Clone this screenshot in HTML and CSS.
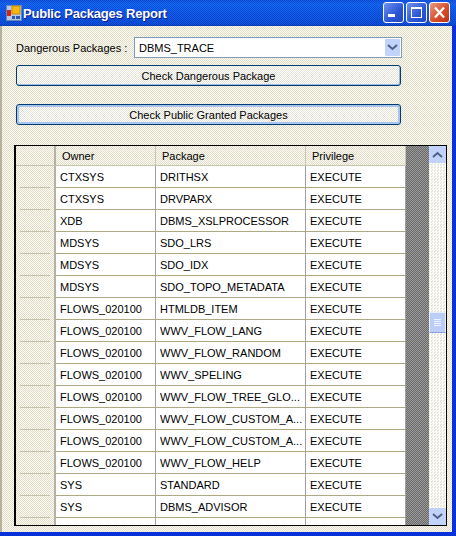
FILE: index.html
```html
<!DOCTYPE html>
<html lang="en">
<head>
    <meta charset="UTF-8">
    <title>Public Packages Report</title>
    <link rel="stylesheet" href="styles.css">
</head>
<body>
    <div class="window">
        <!-- Title bar -->
        <div class="titlebar">
            <svg class="app-icon" width="16" height="16" viewBox="0 0 16 16">
                <rect x="0.5" y="0.5" width="15" height="15" fill="#b8c8e8" stroke="#6a84b8"/>
                <rect x="6" y="1" width="8" height="8" fill="#f4b810" stroke="#c88808"/>
                <rect x="1" y="5" width="4" height="6" fill="#d02818"/>
                <rect x="6" y="11" width="3" height="3" fill="#3058a8"/>
                <rect x="10" y="11" width="4" height="3" fill="#3058a8"/>
            </svg>
            <span class="title">Public Packages Report</span>
            <div class="caption-buttons">
                <div class="caption-btn">
                    <svg width="19" height="19" viewBox="0 0 19 19"><rect x="4" y="11" width="7" height="3" fill="#fff"/></svg>
                </div>
                <div class="caption-btn">
                    <svg width="19" height="19" viewBox="0 0 19 19"><rect x="4.5" y="4.5" width="10" height="10" fill="none" stroke="#fff"/><rect x="4" y="4" width="11" height="2" fill="#fff"/></svg>
                </div>
                <div class="caption-btn close">
                    <svg width="19" height="19" viewBox="0 0 19 19"><path d="M5 4.5 L14 14.5 M14 4.5 L5 14.5" stroke="#fff" stroke-width="2.2" fill="none"/></svg>
                </div>
            </div>
        </div>

        <!-- Form -->
        <div class="content">
            <div class="combo-row">
                <label class="combo-label">Dangerous Packages :</label>
                <div class="combo">
                    <span class="combo-value">DBMS_TRACE</span>
                    <div class="arrow-btn combo-arrow">
                        <svg width="11" height="7" viewBox="0 0 11 7"><path d="M1 1 L5.5 5 L10 1" stroke="#4d6185" stroke-width="2" fill="none"/></svg>
                    </div>
                </div>
            </div>
            <button class="push-btn">Check Dangerous Package</button>
            <button class="push-btn second">Check Public Granted Packages</button>

            <!-- Grid -->
            <div class="grid">
                <div class="grid-view">
                    <table class="data-table">
                        <thead>
                            <tr>
                                <th class="row-head"></th>
                                <th class="col-owner">Owner</th>
                                <th class="col-package">Package</th>
                                <th class="col-privilege">Privilege</th>
                            </tr>
                        </thead>
                        <tbody>
                            <tr><td class="row-head"></td><td>CTXSYS</td><td>DRITHSX</td><td>EXECUTE</td></tr>
                            <tr><td class="row-head"></td><td>CTXSYS</td><td>DRVPARX</td><td>EXECUTE</td></tr>
                            <tr><td class="row-head"></td><td>XDB</td><td>DBMS_XSLPROCESSOR</td><td>EXECUTE</td></tr>
                            <tr><td class="row-head"></td><td>MDSYS</td><td>SDO_LRS</td><td>EXECUTE</td></tr>
                            <tr><td class="row-head"></td><td>MDSYS</td><td>SDO_IDX</td><td>EXECUTE</td></tr>
                            <tr><td class="row-head"></td><td>MDSYS</td><td>SDO_TOPO_METADATA</td><td>EXECUTE</td></tr>
                            <tr><td class="row-head"></td><td>FLOWS_020100</td><td>HTMLDB_ITEM</td><td>EXECUTE</td></tr>
                            <tr><td class="row-head"></td><td>FLOWS_020100</td><td>WWV_FLOW_LANG</td><td>EXECUTE</td></tr>
                            <tr><td class="row-head"></td><td>FLOWS_020100</td><td>WWV_FLOW_RANDOM</td><td>EXECUTE</td></tr>
                            <tr><td class="row-head"></td><td>FLOWS_020100</td><td>WWV_SPELING</td><td>EXECUTE</td></tr>
                            <tr><td class="row-head"></td><td>FLOWS_020100</td><td>WWV_FLOW_TREE_GLO...</td><td>EXECUTE</td></tr>
                            <tr><td class="row-head"></td><td>FLOWS_020100</td><td>WWV_FLOW_CUSTOM_A...</td><td>EXECUTE</td></tr>
                            <tr><td class="row-head"></td><td>FLOWS_020100</td><td>WWV_FLOW_CUSTOM_A...</td><td>EXECUTE</td></tr>
                            <tr><td class="row-head"></td><td>FLOWS_020100</td><td>WWV_FLOW_HELP</td><td>EXECUTE</td></tr>
                            <tr><td class="row-head"></td><td>SYS</td><td>STANDARD</td><td>EXECUTE</td></tr>
                            <tr><td class="row-head"></td><td>SYS</td><td>DBMS_ADVISOR</td><td>EXECUTE</td></tr>
                            <tr><td class="row-head"></td><td></td><td></td><td></td></tr>
                        </tbody>
                    </table>
                    <div class="grid-empty"></div>
                </div>
                <div class="scrollbar">
                    <div class="arrow-btn scroll-arrow">
                        <svg width="11" height="7" viewBox="0 0 11 7"><path d="M1 6 L5.5 2 L10 6" stroke="#4d6185" stroke-width="2" fill="none"/></svg>
                    </div>
                    <div class="scroll-track"></div>
                    <div class="scroll-thumb">
                        <span></span><span></span><span></span><span></span>
                    </div>
                    <div class="scroll-track lower"></div>
                    <div class="arrow-btn scroll-arrow">
                        <svg width="11" height="7" viewBox="0 0 11 7"><path d="M1 1 L5.5 5 L10 1" stroke="#4d6185" stroke-width="2" fill="none"/></svg>
                    </div>
                </div>
            </div>
        </div>
    </div>
</body>
</html>
```

FILE: styles.css
```css
* {
    box-sizing: border-box;
}

body {
    margin: 0;
    padding: 0;
    font-family: 'Liberation Sans', Arial, sans-serif;
    font-size: 11px;
    color: #000;
    background: #0831d9;
}

.window {
    width: 456px;
    height: 536px;
    display: flex;
    flex-direction: column;
    overflow: hidden;
}

.titlebar {
    height: 26px;
    flex: none;
    display: flex;
    align-items: center;
    padding: 0 6px;
    background:
        repeating-conic-gradient(rgba(255,255,255,0.07) 0 25%, rgba(0,0,0,0.07) 0 50%) 0 0 / 2px 2px,
        linear-gradient(#0a4ee0 0, #0a5cf0 4px, #0550e6 14px, #0246d8 24px, #0238b8 26px);
}

.app-icon {
    flex: none;
}

.title {
    margin-left: 1px;
    font-size: 13px;
    font-weight: bold;
    letter-spacing: -0.2px;
    color: #fff;
    text-shadow: 1px 1px 0 #0f1f8f;
}

.caption-buttons {
    margin-left: auto;
    display: flex;
    gap: 2px;
    margin-top: -1px;
}

.caption-btn {
    width: 21px;
    height: 21px;
    border: 1px solid #fff;
    border-radius: 3px;
    background: linear-gradient(135deg, #6f92ea, #2c55d6 60%, #2348c0);
}

.caption-btn svg {
    display: block;
}

.caption-btn.close {
    background: linear-gradient(135deg, #ec9a80, #d8502c 55%, #bc3010);
}

.content {
    flex: 1;
    display: flex;
    flex-direction: column;
    margin: 0 4px 4px 0;
    padding: 11px 5px 5px 12px;
    border-left: 2px solid #b4b29c;
    background: repeating-conic-gradient(#fdfcf4 0 25%, #e0dcc8 0 50%) 0 0 / 2px 2px;
    min-height: 0;
}

.combo-row {
    display: flex;
    align-items: center;
    height: 21px;
    padding-left: 2px;
}

.combo-label {
    width: 118px;
    flex: none;
}

.combo {
    width: 268px;
    height: 21px;
    display: flex;
    align-items: center;
    justify-content: space-between;
    padding: 0 1px 0 4px;
    background: #fff;
    border: 1px solid #7f9db9;
}

.arrow-btn {
    display: flex;
    align-items: center;
    justify-content: center;
    background: #c1d3fb;
    border-radius: 1px;
}

.combo-arrow {
    width: 15px;
    height: 17px;
}

.push-btn {
    display: block;
    width: 385px;
    height: 21px;
    margin: 7px 0 0 2px;
    padding: 0;
    font-family: inherit;
    font-size: 11px;
    color: #000;
    border: 1px solid #003c74;
    border-radius: 3px;
    background: repeating-conic-gradient(#ffffff 0 25%, #e4e2d4 0 50%) 0 0 / 2px 2px;
    box-shadow: inset -1px -1px 0 #9db8e0;
}

.push-btn.second {
    margin-top: 18px;
    box-shadow: inset 0 0 0 2px #a9c4ee;
}

.grid {
    flex: none;
    width: 433px;
    height: 381px;
    margin-top: 20px;
    display: flex;
    border: 2px solid #000;
    border-width: 1px 1px 1px 2px;
    overflow: hidden;
}

.grid-view {
    flex: 1;
    display: flex;
    min-width: 0;
    overflow: hidden;
}

.data-table {
    width: 390px;
    flex: none;
    table-layout: fixed;
    border-collapse: separate;
    border-spacing: 0;
    align-self: flex-start;
}

.data-table th {
    height: 20px;
    padding: 0 0 0 6px;
    font-weight: normal;
    text-align: left;
    background: repeating-conic-gradient(#fdfcf4 0 25%, #e0dcc8 0 50%) 0 0 / 2px 2px;
    border-bottom: 1px solid #c8c5b2;
    border-right: 1px solid #c8c5b2;
}

.data-table td {
    height: 22px;
    padding: 1px 0 0 4px;
    background: #fff;
    white-space: nowrap;
    overflow: hidden;
    border-bottom: 1px solid #aca983;
    border-right: 1px solid #a0a0a0;
}

.data-table td.row-head {
    width: 40px;
    background:
        linear-gradient(#c4c1aa, #c4c1aa) center bottom / 30px 1px no-repeat,
        repeating-conic-gradient(#fdfcf4 0 25%, #e0dcc8 0 50%) 0 0 / 2px 2px;
    border-right: 2px solid #b4b2a4;
    border-bottom: 0;
}

.data-table th.row-head {
    width: 40px;
    border-right: 2px solid #b4b2a4;
}

.col-owner {
    width: 100px;
}

.col-package {
    width: 150px;
}

.col-privilege {
    width: 100px;
}

.grid-empty {
    flex: 1;
    background: repeating-conic-gradient(#6a6a6a 0 25%, #9a9a9a 0 50%) 0 0 / 2px 2px;
}

.scrollbar {
    width: 17px;
    flex: none;
    display: flex;
    flex-direction: column;
    background: #fff;
}

.scroll-arrow {
    height: 17px;
    flex: none;
}

.scroll-track {
    height: 149px;
    flex: none;
    background: repeating-conic-gradient(#fff 0 25%, #e8e6d6 0 50%) 0 0 / 3px 3px;
}

.scroll-track.lower {
    height: auto;
    flex: 1;
}

.scroll-thumb {
    height: 21px;
    flex: none;
    display: flex;
    flex-direction: column;
    align-items: center;
    justify-content: center;
    gap: 1px;
    background: #bccdf8;
    border: 1px solid #e8eefc;
    border-bottom-color: #8aa0dc;
}

.scroll-thumb span {
    width: 7px;
    height: 1px;
    background: #eef3fe;
}
```
